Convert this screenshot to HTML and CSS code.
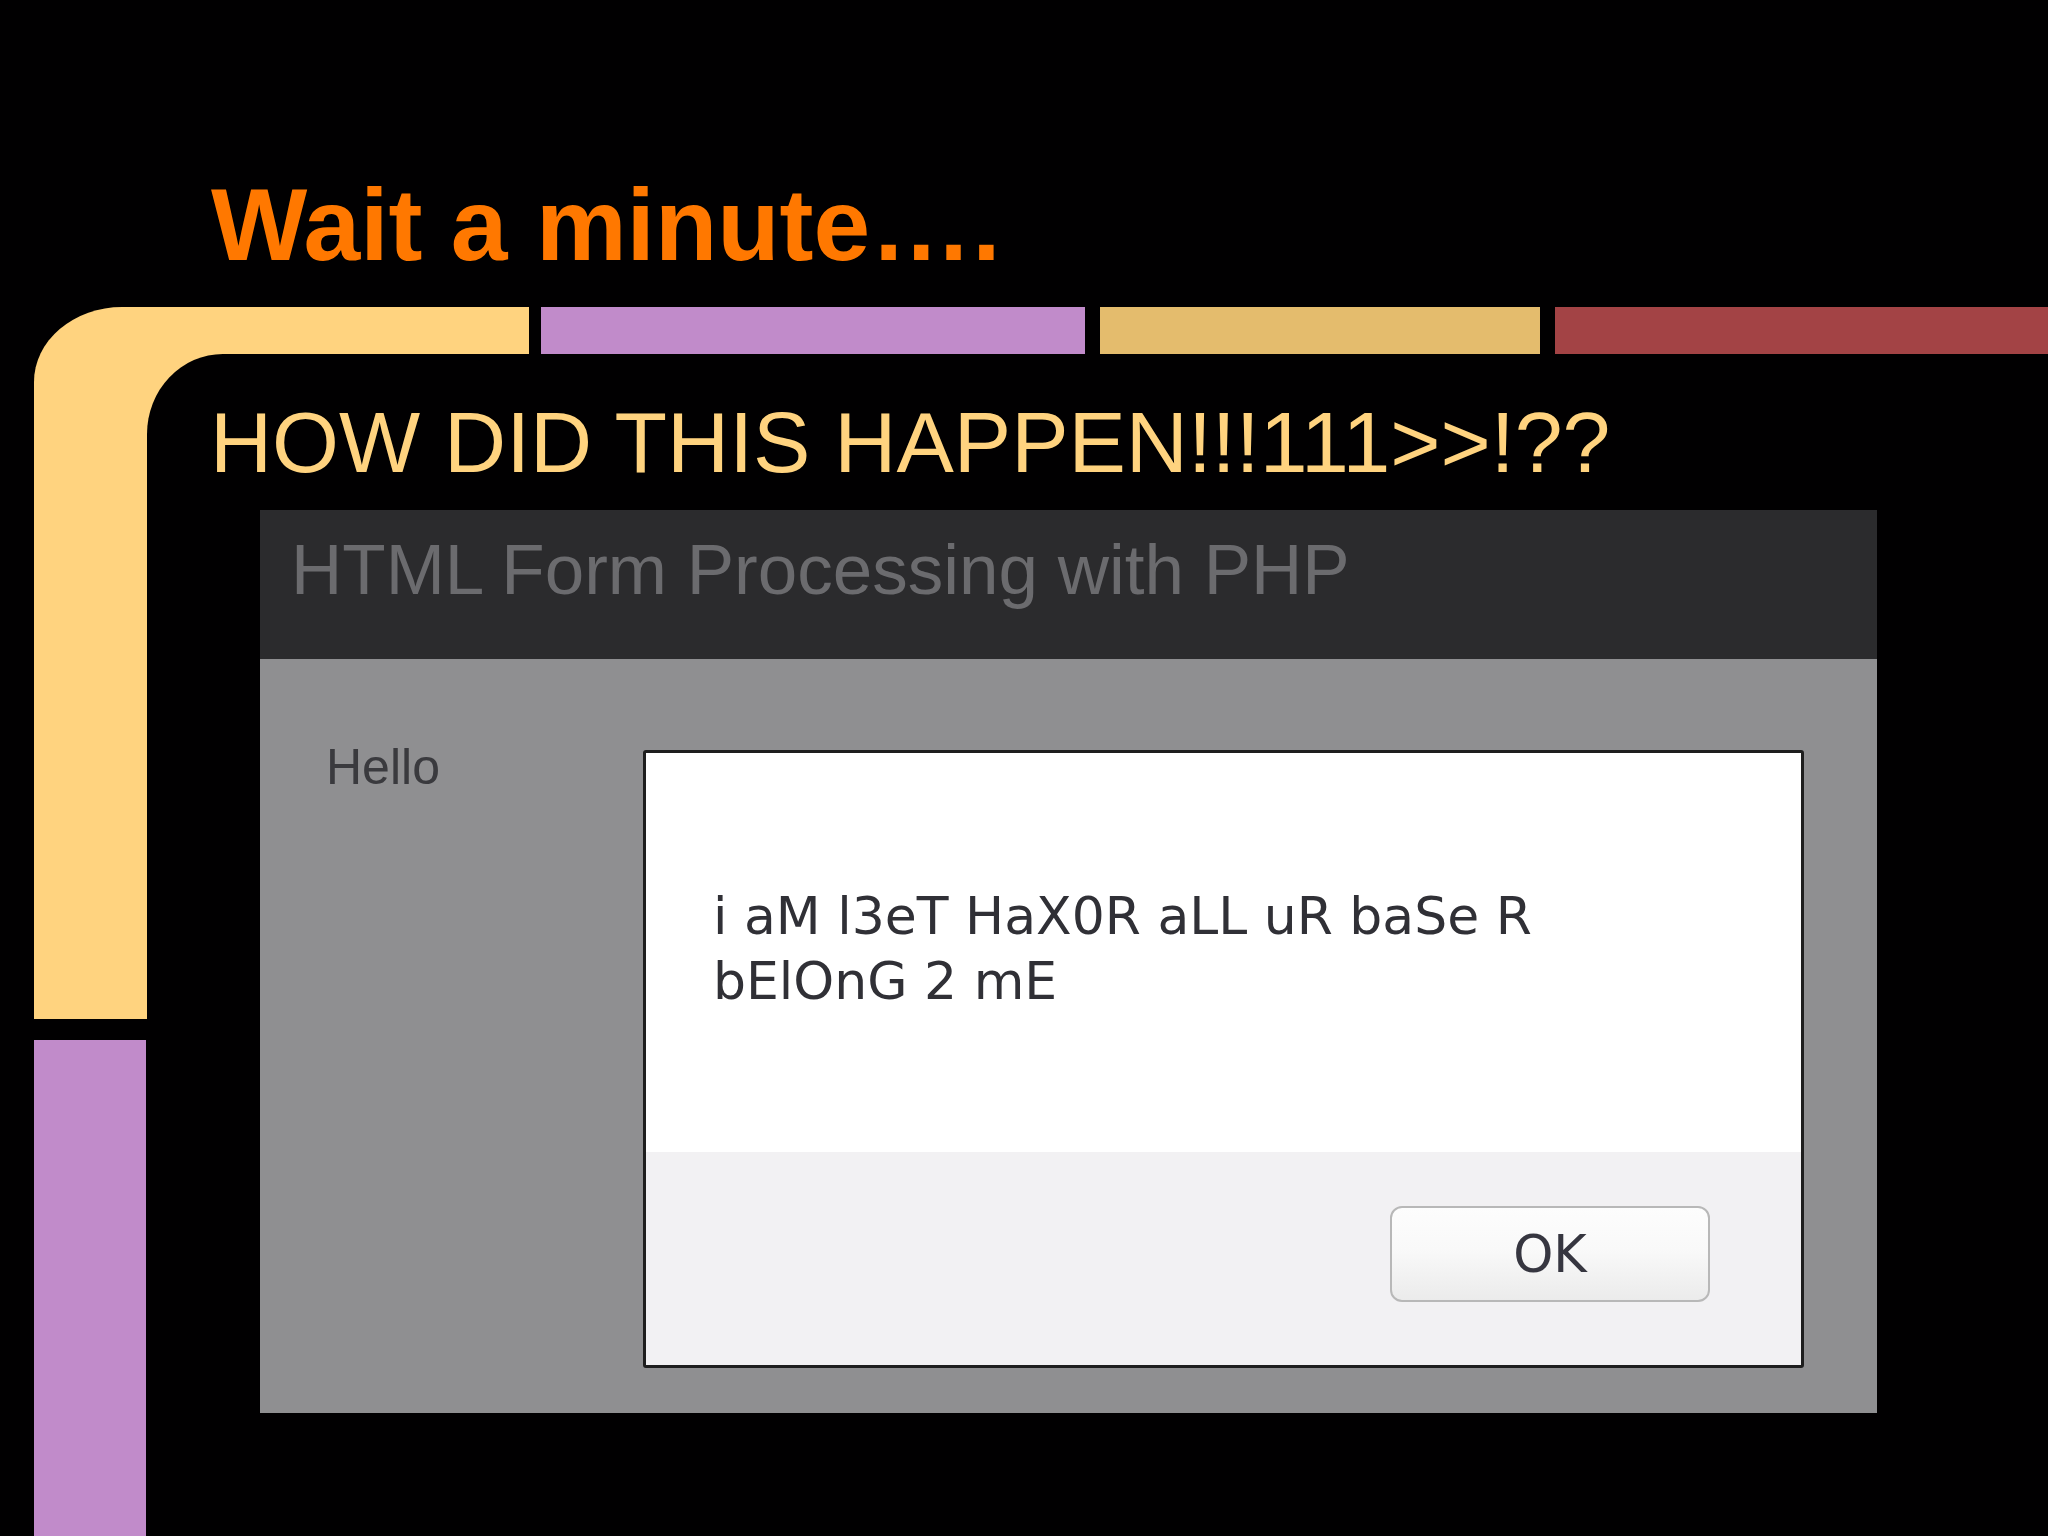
FILE: index.html
```html
<!DOCTYPE html>
<html lang="en">
<head>
<meta charset="utf-8">
<title>Wait a minute….</title>
<link rel="stylesheet" href="styles.css">
</head>
<body>
<div class="slide">
  <h1 class="title">Wait a minute….</h1>
  <div class="frame">
    <div class="corner"></div>
    <div class="bar bar-purple"></div>
    <div class="bar bar-tan"></div>
    <div class="bar bar-red"></div>
    <div class="rail-purple"></div>
    <div class="content">
      <h2 class="subtitle">HOW DID THIS HAPPEN!!!111&gt;&gt;!??</h2>
      <div class="shot">
        <div class="shot-header">HTML Form Processing with PHP</div>
        <div class="shot-body">
          <div class="hello">Hello</div>
          <div class="dialog">
            <div class="dialog-msg">i aM l3eT HaX0R aLL uR baSe R<br>bElOnG 2 mE</div>
            <div class="dialog-foot"><button class="ok" type="button">OK</button></div>
          </div>
        </div>
      </div>
    </div>
  </div>
</div>
</body>
</html>
```
FILE: styles.css
```css
html, body {
  margin: 0;
  padding: 0;
  background: #010001;
}

.slide {
  width: 2048px;
  height: 1536px;
  background: #010001;
  overflow: hidden;
  display: flex;
  flex-direction: column;
}

.title {
  margin: 174px 0 0 211px;
  font-family: "Liberation Sans", Arial, sans-serif;
  font-weight: bold;
  font-size: 102px;
  line-height: 102px;
  color: #ff7800;
  white-space: nowrap;
}

.frame {
  margin: 31px 0 0 34px;
  height: 1229px;
  display: grid;
  grid-template-columns: 113px 382px 12px 544px 15px 440px 15px 1fr;
  grid-template-rows: 47px 665px 21px 1fr;
}

.corner {
  grid-column: 1 / 3;
  grid-row: 1 / 3;
  background: #ffd37f;
  border-top-left-radius: 88px 75px;
}

.bar-purple {
  grid-column: 4;
  grid-row: 1;
  background: #c18bca;
}

.bar-tan {
  grid-column: 6;
  grid-row: 1;
  background: #e4bc6d;
}

.bar-red {
  grid-column: 8;
  grid-row: 1;
  background: #a34345;
}

.rail-purple {
  grid-column: 1;
  grid-row: 4;
  width: 112px;
  background: #c18bca;
}

.content {
  grid-column: 2 / -1;
  grid-row: 2 / -1;
  background: #010001;
  border-top-left-radius: 76px 80px;
  display: flex;
  flex-direction: column;
  align-items: flex-start;
}

.subtitle {
  margin: 45px 0 0 63px;
  font-family: "Liberation Sans", Arial, sans-serif;
  font-weight: normal;
  font-size: 86px;
  line-height: 86px;
  color: #ffd37f;
  white-space: nowrap;
}

.shot {
  margin: 25px 0 0 113px;
  width: 1617px;
  height: 903px;
  display: flex;
  flex-direction: column;
}

.shot-header {
  height: 149px;
  box-sizing: border-box;
  padding: 24px 0 0 31px;
  background: #2b2b2d;
  color: #6b6b6e;
  font-family: "Liberation Sans", Arial, sans-serif;
  font-size: 71px;
  line-height: 71px;
  white-space: nowrap;
}

.shot-body {
  flex: 1;
  background: #8f8f91;
  display: flex;
  align-items: flex-start;
  padding: 83px 0 0 66px;
}

.hello {
  width: 317px;
  font-family: "Liberation Sans", Arial, sans-serif;
  font-size: 50px;
  line-height: 50px;
  color: #3a3a3e;
}

.dialog {
  margin-top: 8px;
  width: 1161px;
  height: 618px;
  box-sizing: border-box;
  border: 3px solid #1e1e1e;
  border-radius: 3px;
  background: #ffffff;
  display: flex;
  flex-direction: column;
  overflow: hidden;
}

.dialog-msg {
  height: 399px;
  box-sizing: border-box;
  padding: 131px 0 0 67px;
  font-family: "DejaVu Sans", Verdana, sans-serif;
  font-size: 52px;
  line-height: 65px;
  color: #303036;
  background: #ffffff;
}

.dialog-foot {
  flex: 1;
  background: #f2f1f3;
  display: flex;
  justify-content: flex-end;
  align-items: flex-start;
  padding: 54px 91px 0 0;
}

.ok {
  width: 320px;
  height: 96px;
  box-sizing: border-box;
  margin: 0;
  padding: 0;
  border: 2px solid #b8b8b8;
  border-radius: 12px;
  background: linear-gradient(#fdfdfd 0%, #f9f9f9 45%, #ebebeb 100%);
  font-family: "DejaVu Sans", Verdana, sans-serif;
  font-size: 51px;
  line-height: 1;
  color: #363640;
  display: flex;
  align-items: center;
  justify-content: center;
}
```
